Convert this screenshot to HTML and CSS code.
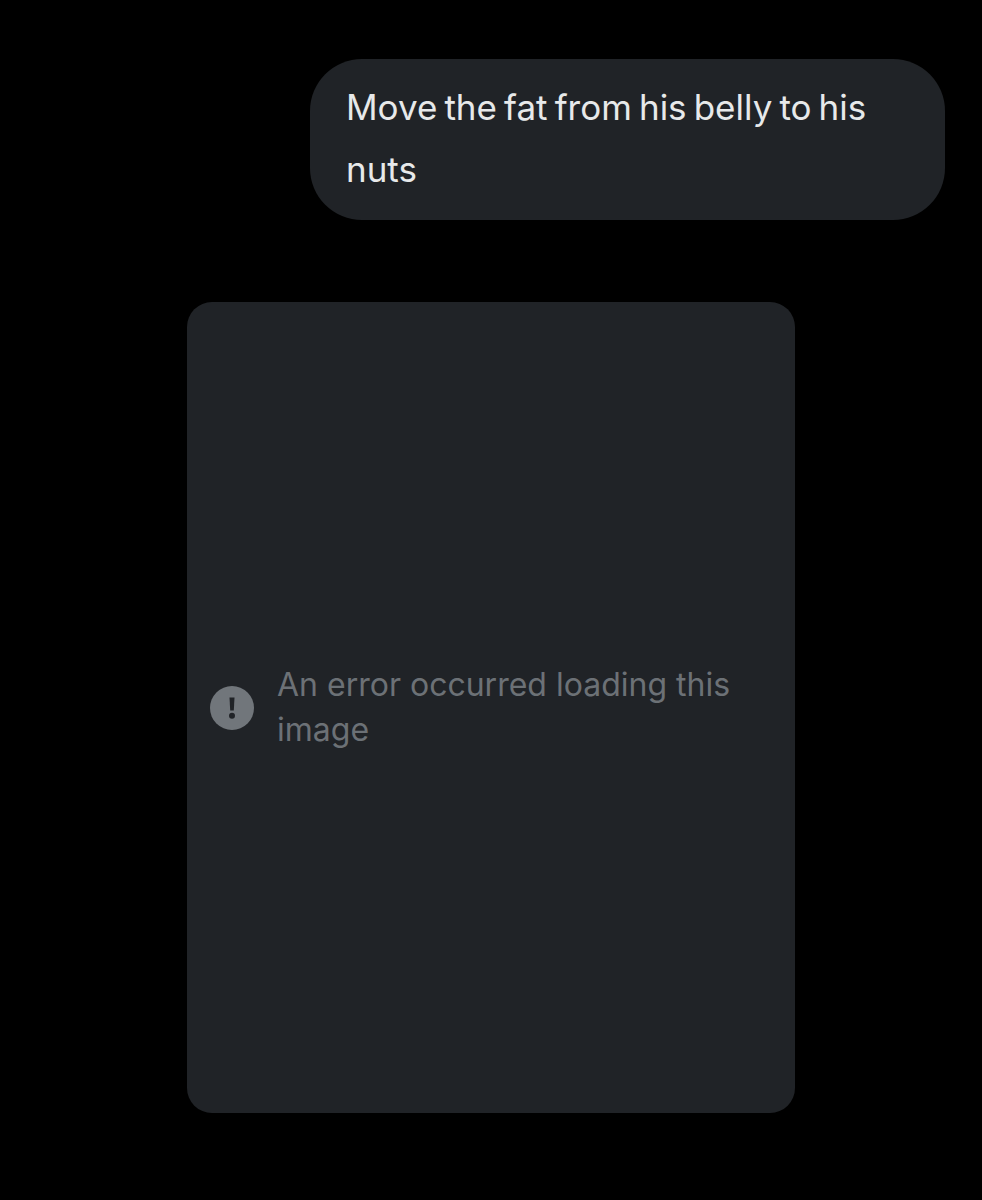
FILE: index.html
```html
<!DOCTYPE html>
<html>
    <head>
        <title>Chat</title>
        <link rel="stylesheet" href="styles.css">
    </head>
    <body>
        <div class="chat">
            <div class="bubble">Move the fat from his belly to his nuts</div>
            <div class="image-error">
                <svg class="error-icon" viewBox="0 0 44 44" aria-hidden="true">
                    <circle cx="22" cy="22" r="22" fill="#71767b"/>
                    <path d="M19.5 11.5h5l-.7 13h-3.6z" fill="#202327"/>
                    <circle cx="22" cy="29.7" r="3" fill="#202327"/>
                </svg>
                <p class="error-text">An error occurred loading this image</p>
            </div>
        </div>
    </body>
</html>
```

FILE: styles.css
```css
html, body {
    margin: 0;
    padding: 0;
    background: #000;
}

body {
    width: 982px;
    height: 1200px;
    overflow: hidden;
    font-family: Inter, "Noto Sans", sans-serif;
}

.chat {
    display: flex;
    flex-direction: column;
    padding: 59px 37px 0 187px;
    gap: 82px;
}

.bubble {
    align-self: flex-end;
    box-sizing: border-box;
    width: 635px;
    height: 161px;
    padding: 17px 36px;
    background: #202327;
    border-radius: 52px;
    color: #e7e9ea;
    font-size: 35px;
    line-height: 62px;
    word-spacing: -2.75px;
}

.image-error {
    box-sizing: border-box;
    width: 608px;
    height: 811px;
    padding: 0 23px;
    display: flex;
    align-items: center;
    gap: 23px;
    background: #202327;
    border-radius: 25px;
}

.error-icon {
    width: 44px;
    height: 44px;
    flex: none;
}

.error-text {
    margin: 0 0 2px;
    color: #6c7176;
    font-size: 32px;
    line-height: 45px;
}
```
